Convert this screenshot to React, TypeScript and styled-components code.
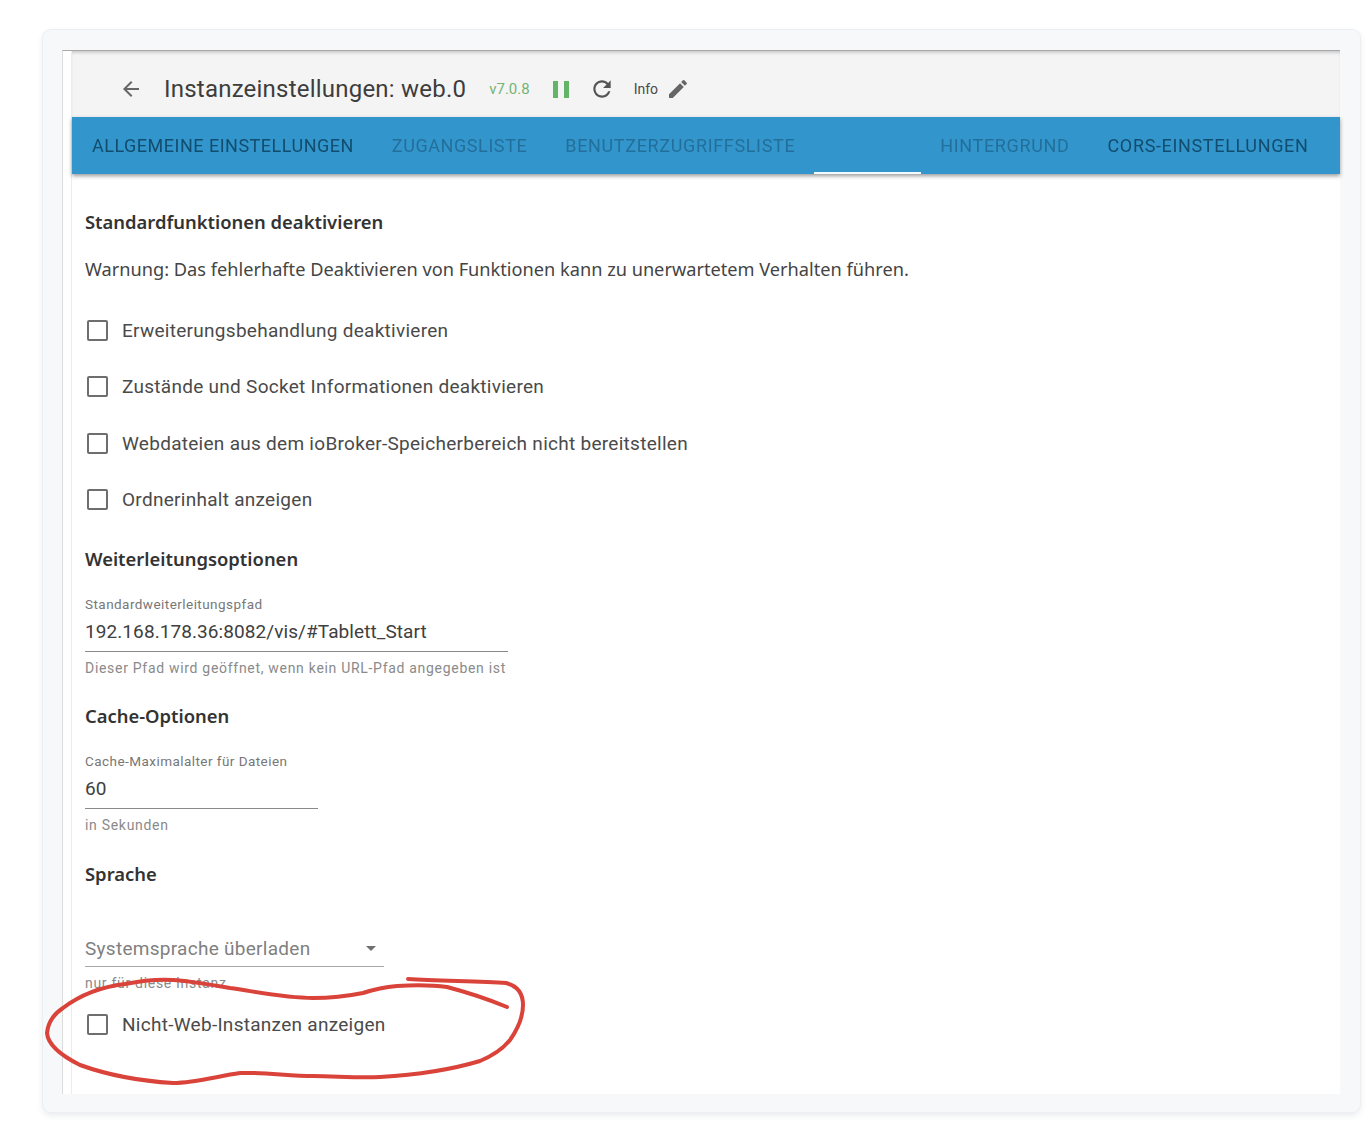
import React from "react";
import styled, { createGlobalStyle } from "styled-components";

const Global = createGlobalStyle`
  html, body { margin: 0; padding: 0; background: #fff; }
  body { font-family: Roboto, "Liberation Sans", sans-serif; }
`;

const Page = styled.div`
  position: relative;
  width: 1370px;
  height: 1138px;
  box-sizing: border-box;
  padding: 30px 10px 26px 43px;
  overflow: hidden;
`;

const Card = styled.div`
  height: 100%;
  box-sizing: border-box;
  padding: 20px 20px 18px 19px;
  background: #f7f8fa;
  border-radius: 8px;
  box-shadow: 0 0 0 1px #eceef1, 0 3px 7px rgba(60, 70, 80, 0.12);
  filter: blur(0.55px);
`;

const Panel = styled.div`
  height: 100%;
  box-sizing: border-box;
  padding-left: 8px;
  background: #fff;
  border-left: 1px solid #dcdcdc;
  border-top: 1px solid #a8a8a8;
`;

const Inner = styled.div`
  height: 100%;
  border-left: 1px solid #ececec;
`;

const Header = styled.div`
  height: 66px;
  box-sizing: border-box;
  display: flex;
  align-items: center;
  padding: 10px 0 0 47px;
  background: #f4f4f4;
  color: #4a4a4a;
  box-shadow: inset 0 3px 3px -1px rgba(0, 0, 0, 0.16);
`;

const Title = styled.span`
  margin-left: 21px;
  font-size: 24px;
  letter-spacing: 0.22px;
  color: #3d3d3d;
`;

const Version = styled.span`
  margin-left: 23px;
  font-size: 15px;
  color: #74b377;
`;

const Pause = styled.span`
  margin-left: 23px;
  width: 16px;
  height: 17px;
  box-sizing: border-box;
  border-left: 5px solid #62b567;
  border-right: 5px solid #62b567;
`;

const Reload = styled.svg`
  margin-left: 20px;
  width: 26px;
  height: 26px;
`;

const Info = styled.span`
  margin-left: 19px;
  font-size: 14px;
  color: #4a4a4a;
`;

const Pencil = styled.svg`
  margin-left: 8px;
  width: 24px;
  height: 24px;
`;

const Back = styled.svg`
  width: 24px;
  height: 24px;
`;

const Tabs = styled.div`
  position: relative;
  height: 57px;
  display: flex;
  padding-left: 1px;
  background: #3296cc;
  box-shadow: 0 2px 4px rgba(0, 0, 0, 0.4);
`;

const Tab = styled.div<{ $active?: boolean; $selected?: boolean; $spread?: number }>`
  box-sizing: border-box;
  height: 57px;
  display: flex;
  align-items: center;
  padding: 0 19px;
  font-size: 18px;
  letter-spacing: ${(p) => p.$spread ?? 0.65}px;
  font-weight: 400;
  white-space: nowrap;
  color: ${(p) => (p.$active ? "#124c6e" : "#236f9b")};
  border-bottom: ${(p) => (p.$selected ? "2px solid #f4fbff" : "none")};
`;

const EmptyTab = styled(Tab)`
  width: 107px;
  padding: 0;
`;

const Content = styled.div`
  padding: 36px 0 0 13px;
`;

const Heading = styled.div<{ $top?: number }>`
  margin-top: ${(p) => p.$top ?? 0}px;
  font-family: "Noto Sans", sans-serif;
  font-size: 18.4px;
  line-height: 24px;
  font-weight: 600;
  color: #333;
`;

const Warning = styled.div`
  margin-top: 23px;
  font-family: "Noto Sans", sans-serif;
  font-size: 18.2px;
  line-height: 24px;
  color: #444;
`;

const CheckRow = styled.label<{ $top: number }>`
  display: flex;
  align-items: center;
  margin-top: ${(p) => p.$top}px;
  height: 24px;
  padding-left: 2px;
  font-size: 19px;
  letter-spacing: 0.28px;
  color: #4a4a4a;
`;

const Box = styled.span`
  width: 21px;
  height: 21px;
  box-sizing: border-box;
  margin-right: 14px;
  border: 2px solid #6e6e6e;
  border-radius: 2px;
`;

const Field = styled.div<{ $width: number; $top: number }>`
  width: ${(p) => p.$width}px;
  margin-top: ${(p) => p.$top}px;
`;

const FieldLabel = styled.div`
  font-size: 13.5px;
  letter-spacing: 0.45px;
  line-height: 16px;
  color: #777;
`;

const FieldValue = styled.div`
  height: 40px;
  line-height: 40px;
  box-sizing: border-box;
  border-bottom: 1px solid #8a8a8a;
  font-size: 19px;
  letter-spacing: 0.08px;
  color: #404040;
`;

const Helper = styled.div`
  margin-top: 8px;
  font-size: 14px;
  letter-spacing: 0.7px;
  line-height: 16px;
  color: #8a8a8a;
  white-space: nowrap;
`;

const SelectValue = styled.div`
  display: flex;
  align-items: center;
  justify-content: space-between;
  height: 36px;
  box-sizing: border-box;
  padding-right: 8px;
  border-bottom: 1px solid #a8a8a8;
  font-size: 19px;
  letter-spacing: 0.28px;
  color: #808080;
`;

const Caret = styled.span`
  width: 0;
  height: 0;
  border-left: 5px solid transparent;
  border-right: 5px solid transparent;
  border-top: 5px solid #707070;
`;

const Ink = styled.svg`
  position: absolute;
  inset: 0;
  width: 1370px;
  height: 1138px;
  pointer-events: none;
`;

const checks1 = [
  { text: "Erweiterungsbehandlung deaktivieren", top: 37 },
  { text: "Zustände und Socket Informationen deaktivieren", top: 32 },
  { text: "Webdateien aus dem ioBroker-Speicherbereich nicht bereitstellen", top: 33 },
  { text: "Ordnerinhalt anzeigen", top: 32 },
];

export default function App() {
  return (
    <Page>
      <Global />
      <Card>
        <Panel>
          <Inner>
            <Header>
              <Back viewBox="0 0 24 24" fill="#666">
                <path d="M20 11H7.83l5.59-5.59L12 4l-8 8 8 8 1.41-1.41L7.83 13H20v-2z" />
              </Back>
              <Title>Instanzeinstellungen: web.0</Title>
              <Version>v7.0.8</Version>
              <Pause />
              <Reload viewBox="0 0 24 24" fill="#555">
                <path d="M17.65 6.35C16.2 4.9 14.21 4 12 4c-4.42 0-7.99 3.58-7.99 8s3.57 8 7.99 8c3.73 0 6.84-2.55 7.73-6h-2.08c-.82 2.33-3.04 4-5.65 4-3.31 0-6-2.69-6-6s2.69-6 6-6c1.66 0 3.14.69 4.22 1.78L13 11h7V4l-2.35 2.35z" />
              </Reload>
              <Info>Info</Info>
              <Pencil viewBox="0 0 24 24" fill="#666">
                <path d="M3 17.25V21h3.75L17.81 9.94l-3.75-3.75L3 17.25zM20.71 7.04c.39-.39.39-1.02 0-1.41l-2.34-2.34a.996.996 0 0 0-1.41 0l-1.83 1.83 3.75 3.75 1.83-1.83z" />
              </Pencil>
            </Header>
            <Tabs>
              <Tab $active $spread={0.5}>ALLGEMEINE EINSTELLUNGEN</Tab>
              <Tab $spread={0.58}>ZUGANGSLISTE</Tab>
              <Tab>BENUTZERZUGRIFFSLISTE</Tab>
              <EmptyTab $selected />
              <Tab>HINTERGRUND</Tab>
              <Tab $active>CORS-EINSTELLUNGEN</Tab>
            </Tabs>
            <Content>
              <Heading>Standardfunktionen deaktivieren</Heading>
              <Warning>Warnung: Das fehlerhafte Deaktivieren von Funktionen kann zu unerwartetem Verhalten führen.</Warning>
              {checks1.map((c) => (
                <CheckRow key={c.text} $top={c.top}>
                  <Box />
                  {c.text}
                </CheckRow>
              ))}
              <Heading $top={36}>Weiterleitungsoptionen</Heading>
              <Field $width={423} $top={25}>
                <FieldLabel>Standardweiterleitungspfad</FieldLabel>
                <FieldValue>192.168.178.36:8082/vis/#Tablett_Start</FieldValue>
                <Helper>Dieser Pfad wird geöffnet, wenn kein URL-Pfad angegeben ist</Helper>
              </Field>
              <Heading $top={28}>Cache-Optionen</Heading>
              <Field $width={233} $top={25}>
                <FieldLabel>Cache-Maximalalter für Dateien</FieldLabel>
                <FieldValue>60</FieldValue>
                <Helper>in Sekunden</Helper>
              </Field>
              <Heading $top={29}>Sprache</Heading>
              <Field $width={299} $top={45}>
                <SelectValue>
                  Systemsprache überladen
                  <Caret />
                </SelectValue>
                <Helper>nur für diese Instanz</Helper>
              </Field>
              <CheckRow $top={21}>
                <Box />
                Nicht-Web-Instanzen anzeigen
              </CheckRow>
            </Content>
          </Inner>
        </Panel>
      </Card>
      <Ink viewBox="0 0 1370 1138" fill="none">
        <path
          d="M408 979 C440 981 480 981 506 983 C518 986 523 994 523 1005 C523 1018 517 1030 510 1040 C502 1050 492 1056 480 1061 C450 1070 415 1075 380 1077 C355 1078 335 1076 313 1076 C290 1076 262 1072 240 1073 C218 1076 196 1083 173 1083 C140 1081 105 1074 80 1065 C62 1056 48 1045 47 1033 C48 1022 54 1014 63 1008 C80 995 100 987 125 984 C140 981 157 979 173 980 C190 981 212 985 230 988 C258 992 285 998 313 998 C332 998 348 996 363 993 C375 989 385 987 397 986 C415 985 432 985 447 987 C470 993 490 1000 507 1007"
          stroke="#d9433a"
          strokeWidth="4"
          strokeLinecap="round"
          strokeLinejoin="round"
        />
      </Ink>
    </Page>
  );
}
